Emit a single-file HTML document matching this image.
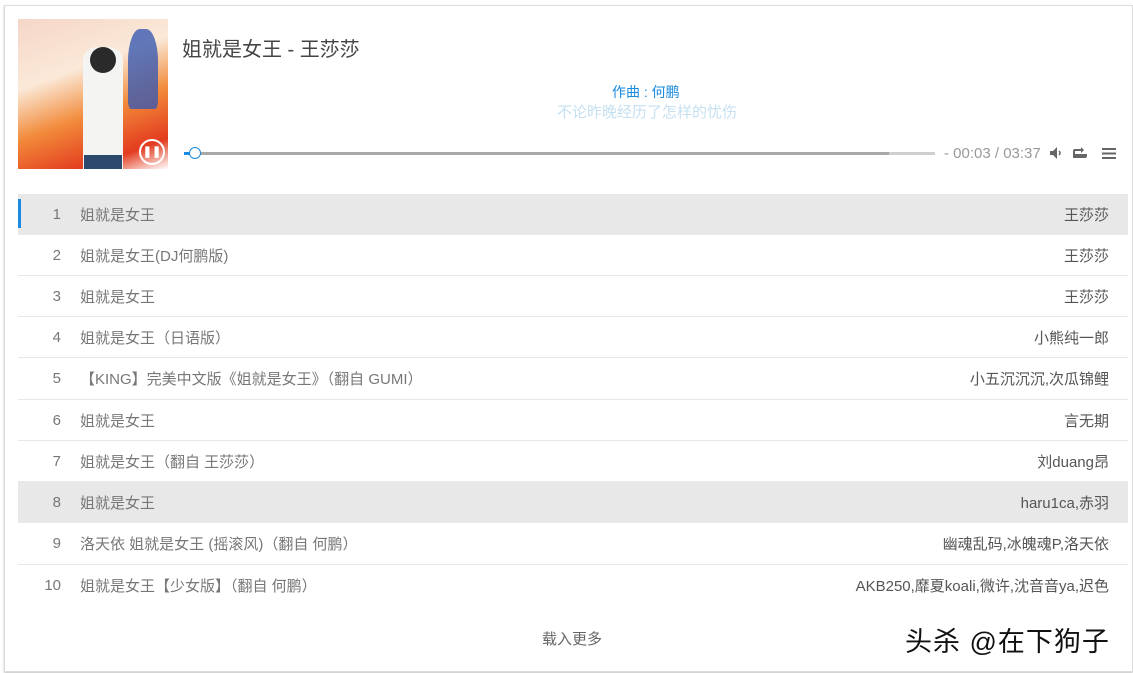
<!DOCTYPE html><html><head><meta charset="utf-8"><style>
body{margin:0;width:1133px;height:673px;background:#fff;font-family:"Liberation Sans","Noto Sans CJK SC",sans-serif;position:relative;overflow:hidden}
.card{position:absolute;left:4px;top:5px;width:1127px;height:665px;border:1px solid #ddd;box-shadow:0 1px 2px rgba(0,0,0,.25);background:#fff}
.a{position:absolute}
.cover{left:18px;top:19px;width:150px;height:150px;background:linear-gradient(160deg,#f5d6c8 0%,#fbe9d8 35%,#f28a3a 60%,#e33b1f 85%,#fff 100%)}
.row{position:absolute;left:18px;width:1110px;height:40px;border-bottom:1px solid #e8e8e8;font-size:15px;color:#777}
.row .n{position:absolute;left:0;width:43px;text-align:right;top:12px;line-height:18px}
.row .t{position:absolute;left:62px;top:10px}
.row .r{position:absolute;right:19px;top:10px;color:#555}
.g{background:#e8e8e8}
</style></head><body>
<div class="card"></div>
<div class="a cover">
<div class="a" style="left:65px;top:28px;width:40px;height:122px;background:#f4f4f2;border-radius:14px 14px 0 0"></div>
<div class="a" style="left:72px;top:28px;width:26px;height:26px;background:#2a2a2a;border-radius:50%"></div>
<div class="a" style="left:66px;top:136px;width:38px;height:14px;background:#2d4a6e"></div>
<div class="a" style="left:110px;top:10px;width:30px;height:80px;background:#3a5ab0;border-radius:40% 40% 10% 10%;opacity:.8"></div>
<div class="a" style="left:121px;top:120px;width:22px;height:22px;border:2px solid #fff;border-radius:50%;color:#fff;font-size:11px;text-align:center;line-height:22px;font-weight:bold">❚❚</div>
</div>
<div class="a" style="left:182px;top:33px;font-size:20px;color:#444">姐就是女王 - 王莎莎</div>
<div class="a" style="left:612px;top:82px;font-size:14px;color:#1a8be0">作曲 : 何鹏</div>
<div class="a" style="left:557px;top:101px;font-size:15px;color:#c5e0f0">不论昨晚经历了怎样的忧伤</div>
<div class="a" style="left:184px;top:152px;width:751px;height:3px;background:#cfcfcf"></div>
<div class="a" style="left:184px;top:152px;width:705px;height:3px;background:#a8a8a8"></div>
<div class="a" style="left:184px;top:152px;width:10px;height:3px;background:#1a8be0"></div>
<div class="a" style="left:189px;top:147px;width:10px;height:10px;border:1.5px solid #1a8be0;border-radius:50%;background:#fff"></div>
<div class="a" style="left:944px;top:145px;font-size:15px;color:#999">- 00:03 / 03:37</div>
<svg class="a" style="left:1049px;top:146px" width="14" height="14" viewBox="0 0 14 14"><path d="M1 5h3l4-4v12l-4-4H1z" fill="#666"/><path d="M10 5q2 2 0 4" stroke="#666" fill="none" stroke-width="1.5"/></svg>
<svg class="a" style="left:1072px;top:147px" width="18" height="12" viewBox="0 0 18 12"><path d="M3 2h6v-2l3 3-3 3v-2H3v3H1V4q0-2 2-2zM15 4v5q0 2-2 2H1V7h14z" fill="#666"/></svg>
<svg class="a" style="left:1102px;top:148px" width="14" height="12" viewBox="0 0 14 12"><rect y="0" width="14" height="2" fill="#666"/><rect y="4.5" width="14" height="2" fill="#666"/><rect y="9" width="14" height="2" fill="#666"/></svg>
<div class="row g" style="top:194px"><div class="a" style="left:0;top:5px;width:3px;height:29px;background:#1a8be0"></div><span class="n">1</span><span class="t">姐就是女王</span><span class="r">王莎莎</span></div>
<div class="row" style="top:235px"><span class="n">2</span><span class="t">姐就是女王(DJ何鹏版)</span><span class="r">王莎莎</span></div>
<div class="row" style="top:276px"><span class="n">3</span><span class="t">姐就是女王</span><span class="r">王莎莎</span></div>
<div class="row" style="top:317px"><span class="n">4</span><span class="t">姐就是女王（日语版）</span><span class="r">小熊纯一郎</span></div>
<div class="row" style="top:358px;height:41px"><span class="n">5</span><span class="t">【KING】完美中文版《姐就是女王》（翻自 GUMI）</span><span class="r">小五沉沉沉,次瓜锦鲤</span></div>
<div class="row" style="top:400px"><span class="n">6</span><span class="t">姐就是女王</span><span class="r">言无期</span></div>
<div class="row" style="top:441px"><span class="n">7</span><span class="t">姐就是女王（翻自 王莎莎）</span><span class="r">刘duang昂</span></div>
<div class="row g" style="top:482px"><span class="n">8</span><span class="t">姐就是女王</span><span class="r">haru1ca,赤羽</span></div>
<div class="row" style="top:523px;height:41px"><span class="n">9</span><span class="t">洛天依 姐就是女王 (摇滚风)（翻自 何鹏）</span><span class="r">幽魂乱码,冰魄魂P,洛天依</span></div>
<div class="row" style="top:565px;border:none"><span class="n">10</span><span class="t">姐就是女王【少女版】（翻自 何鹏）</span><span class="r">AKB250,靡夏koali,微许,沈音音ya,迟色</span></div>
<div class="a" style="left:542px;top:628px;font-size:15px;color:#666">载入更多</div>
<div class="a" style="left:905px;top:620px;font-size:27px;color:#111;letter-spacing:1px">头杀 @在下狗子</div>
</body></html>
